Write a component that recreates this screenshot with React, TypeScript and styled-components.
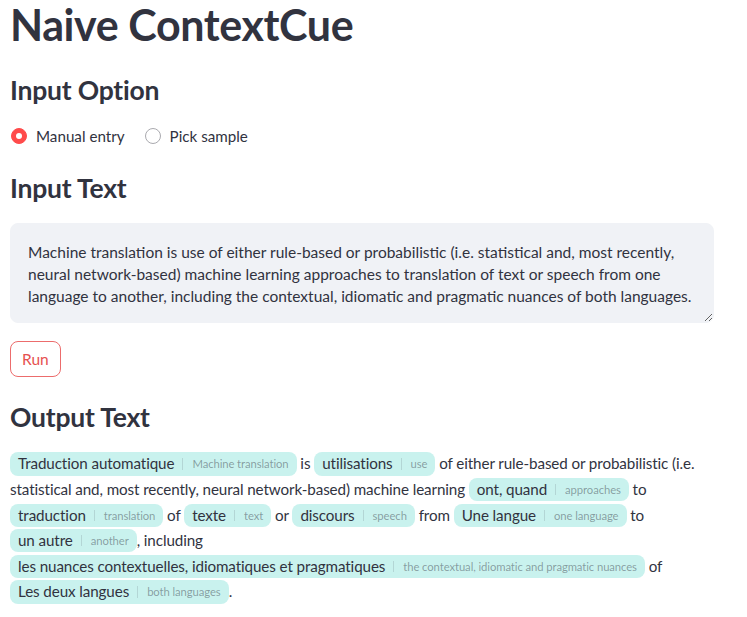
import React from "react";
import styled, { createGlobalStyle } from "styled-components";

const GlobalStyle = createGlobalStyle`
  body {
    margin: 0;
    background: #ffffff;
    font-family: "Lato", "Liberation Sans", sans-serif;
    color: rgb(49, 51, 63);
  }
`;

type Segment = string | { text: string; label: string };

const outputSegments: Segment[] = [
  { text: "Traduction automatique", label: "Machine translation" },
  " is ",
  { text: "utilisations", label: "use" },
  " of either rule-based or probabilistic (i.e. statistical and, most recently, neural network-based) machine learning ",
  { text: "ont, quand", label: "approaches" },
  " to ",
  { text: "traduction", label: "translation" },
  " of ",
  { text: "texte", label: "text" },
  " or ",
  { text: "discours", label: "speech" },
  " from ",
  { text: "Une langue", label: "one language" },
  " to ",
  { text: "un autre", label: "another" },
  ", including ",
  {
    text: "les nuances contextuelles, idiomatiques et pragmatiques",
    label: "the contextual, idiomatic and pragmatic nuances",
  },
  " of ",
  { text: "Les deux langues", label: "both languages" },
  ".",
];

const inputText =
  "Machine translation is use of either rule-based or probabilistic (i.e. statistical and, most recently, neural network-based) machine learning approaches to translation of text or speech from one language to another, including the contextual, idiomatic and pragmatic nuances of both languages.";

const Main = styled.main`
  width: 704px;
  padding: 3px 10px 0;
  display: flex;
  flex-direction: column;
`;

const Title = styled.h1`
  margin: 0 0 29px;
  font-size: 43px;
  line-height: 1;
  font-weight: 700;
  letter-spacing: -0.4px;
  color: rgb(49, 51, 63);
`;

const SubHeading = styled.h3<{ $gap: number }>`
  margin: 0 0 ${(p) => p.$gap}px;
  font-size: 26.5px;
  line-height: 1.2;
  font-weight: 700;
  letter-spacing: -0.2px;
  color: rgb(49, 51, 63);
`;

const RadioGroup = styled.div`
  display: flex;
  align-items: center;
  gap: 19px;
  height: 24px;
  margin: 0 0 25px;
`;

const RadioOption = styled.label`
  display: flex;
  align-items: center;
  gap: 9px;
  font-size: 15.2px;
  cursor: pointer;
`;

const RadioDot = styled.span<{ $checked?: boolean }>`
  width: 16px;
  height: 16px;
  border-radius: 50%;
  box-sizing: border-box;
  margin-left: 1px;
  background: ${(p) => (p.$checked ? "#ff4b4b" : "#ffffff")};
  border: 1px solid ${(p) => (p.$checked ? "#ff4b4b" : "rgb(170, 170, 175)")};
  display: flex;
  align-items: center;
  justify-content: center;

  &::after {
    content: "";
    width: 6px;
    height: 6px;
    border-radius: 50%;
    background: #ffffff;
    display: ${(p) => (p.$checked ? "block" : "none")};
  }
`;

const TextArea = styled.textarea`
  box-sizing: border-box;
  width: 704px;
  height: 100px;
  margin: 0 0 18px;
  padding: 17px 17px;
  border: 1px solid #f0f2f6;
  border-radius: 8px;
  background: #f0f2f6;
  color: rgb(49, 51, 63);
  font-family: "Lato", "Liberation Sans", sans-serif;
  font-size: 15.5px;
  line-height: 22.4px;
  outline: none;
  resize: vertical;
  overflow: hidden;
`;

const RunButton = styled.button`
  align-self: flex-start;
  height: 36px;
  padding: 0 11px;
  margin-bottom: 25px;
  border: 1px solid rgb(236, 108, 108);
  border-radius: 8px;
  background: #ffffff;
  color: rgb(230, 80, 80);
  font-family: "Lato", "Liberation Sans", sans-serif;
  font-size: 15.5px;
  cursor: pointer;
`;

const Output = styled.p`
  margin: 1px 0 0;
  font-size: 15.2px;
  letter-spacing: -0.1px;
  line-height: 25.6px;
  color: rgb(49, 51, 63);
`;

const Chip = styled.span`
  display: inline-flex;
  align-items: center;
  padding: 4px 8px;
  border-radius: 8px;
  background: #c9f2ee;
  line-height: 1;
`;

const ChipLabel = styled.span`
  margin-left: 8px;
  padding-left: 9px;
  border-left: 1px solid rgba(49, 51, 63, 0.14);
  font-size: 11.3px;
  letter-spacing: -0.1px;
  color: rgba(49, 51, 63, 0.45);
`;

export default function App() {
  return (
    <>
      <GlobalStyle />
      <Main>
        <Title>Naive ContextCue</Title>
        <SubHeading $gap={17}>Input Option</SubHeading>
        <RadioGroup>
          <RadioOption>
            <RadioDot $checked />
            Manual entry
          </RadioOption>
          <RadioOption>
            <RadioDot />
            Pick sample
          </RadioOption>
        </RadioGroup>
        <SubHeading $gap={18}>Input Text</SubHeading>
        <TextArea defaultValue={inputText} />
        <RunButton>Run</RunButton>
        <SubHeading $gap={17}>Output Text</SubHeading>
        <Output>
          {outputSegments.map((seg, i) =>
            typeof seg === "string" ? (
              <React.Fragment key={i}>{seg}</React.Fragment>
            ) : (
              <Chip key={i}>
                {seg.text}
                <ChipLabel>{seg.label}</ChipLabel>
              </Chip>
            )
          )}
        </Output>
      </Main>
    </>
  );
}
